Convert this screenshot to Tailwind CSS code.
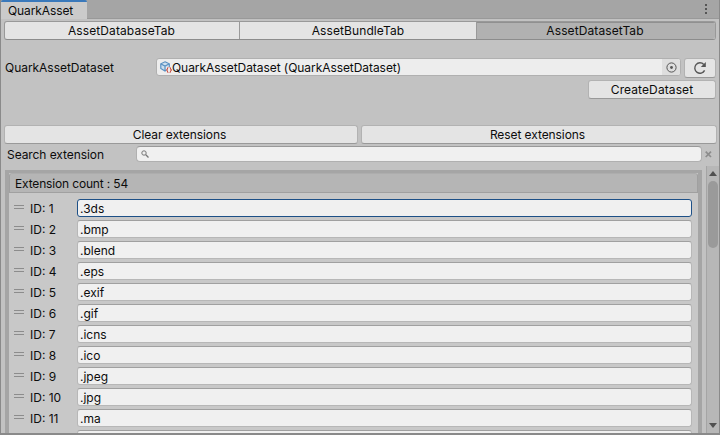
<!DOCTYPE html>
<html lang="en">
<head>
<meta charset="utf-8">
<title>QuarkAsset</title>
<script src="https://cdn.jsdelivr.net/npm/@tailwindcss/browser@4"></script>
</head>
<body class="w-[720px] h-[435px] overflow-hidden bg-[#c2c2c2] text-[#0c0c0c] font-[Inter,sans-serif] text-[12px] leading-[18px] whitespace-nowrap">
<div class="w-[720px] h-[435px] flex flex-col overflow-hidden border-l border-r border-b-2 border-[#8a8a8a]">
  <header class="h-[19px] shrink-0 flex justify-between bg-[#a5a5a5] border-b border-[#999999]">
    <div class="w-[86px] h-[19px] bg-[#cbcbcb] border-t-2 border-[#3a79bb] pl-[7px] leading-[18px] rounded-t-[2px] tracking-[-0.1px]">QuarkAsset</div>
    <svg class="mr-[10px] mt-1" width="5" height="11" fill="#555"><rect x="1" y="0" width="2" height="2"/><rect x="1" y="4" width="2" height="2"/><rect x="1" y="8" width="2" height="2"/></svg>
  </header>
  <nav class="mt-[2px] ml-[3px] w-[712px] h-[19px] shrink-0 flex text-center border border-[#999999] border-b-[#8c8c8c] rounded-[3px] overflow-hidden bg-[#e4e4e4] tracking-[0.1px]">
    <div class="w-[235px] border-r border-[#999] pr-px">AssetDatabaseTab</div>
    <div class="w-[237px] border-r border-[#999]">AssetBundleTab</div>
    <div class="flex-1 bg-[#b1b1b1] shadow-[inset_0_1px_0_#909090] pr-[2px]">AssetDatasetTab</div>
  </nav>
  <div class="mt-[18px] pl-1 h-[20px] shrink-0 flex">
    <div class="w-[151px] leading-[20px] tracking-[-0.04px]">QuarkAssetDataset</div>
    <div class="w-[525px] h-[18px] flex items-center bg-[#ededed] border border-[#b0b0b0] rounded-[3px] overflow-hidden pl-[3px]">
      <svg width="12" height="12" viewBox="0 0 12 12" fill="none"><path d="M5 .8 9.3 2.8V7.5L5 10 .8 7.5V2.8Z" fill="#cfe0ee" stroke="#5a91c2" stroke-width="1.2"/><path d="M1 3 5 5 9 3M5 5V10" stroke="#5a91c2" stroke-width="1.2"/><path d="M6 6h6v6H6z" fill="#ededed"/><path d="M8.4 6.5Q7.4 6.5 7.4 8L6.6 9l.8 1q0 1.5 1 1.5M9.6 6.5q1 0 1 1.5l.8 1-.8 1q0 1.5-1 1.5" stroke="#c85046" stroke-width="1.1"/></svg>
      <span class="tracking-[-0.06px] relative top-px">QuarkAssetDataset (QuarkAssetDataset)</span>
      <div class="ml-auto w-[18px] h-[16px] bg-[#dedede] flex items-center justify-center"><svg width="11" height="11" fill="none" stroke="#555"><circle cx="5.5" cy="5.5" r="4.6"/><circle cx="5.5" cy="5.5" r="1.4" fill="#555" stroke="none"/></svg></div>
    </div>
    <div class="ml-[3px] w-[32px] h-[20px] bg-[#e4e4e4] border border-[#b2b2b2] border-b-[#999] rounded-[3px] flex items-center justify-center"><svg width="14" height="14" fill="none"><path d="M10.8 3.5A5.2 5.2 0 1 0 11.6 9.4" stroke="#555" stroke-width="1.4"/><path d="M12.8 1v5H7.8Z" fill="#555"/></svg></div>
  </div>
  <div class="mt-[2px] ml-[587px] w-[128px] h-[19px] shrink-0 text-center tracking-[0.1px] bg-[#e4e4e4] border border-[#b2b2b2] border-b-[#999] rounded-[3px]">CreateDataset</div>
  <div class="mt-[26px] ml-[3px] h-[19px] shrink-0 flex gap-[3px] text-center tracking-[-0.08px]">
    <div class="w-[354px] bg-[#e4e4e4] border border-[#b2b2b2] border-b-[#999] rounded-[3px] pr-[3px]">Clear extensions</div>
    <div class="w-[356px] bg-[#e4e4e4] border border-[#b2b2b2] border-b-[#999] rounded-[3px] pr-[3px]">Reset extensions</div>
  </div>
  <div class="mt-[2px] h-[20px] shrink-0 flex pl-[6px]">
    <div class="w-[129px] tracking-[-0.07px]">Search extension</div>
    <div class="w-[566px] h-[16px] bg-[#f0f0f0] border border-[#b0b0b0] border-t-[#999] rounded-[4px] pl-[4px] pt-[3px]"><svg width="8" height="9" fill="none" stroke="#777"><circle cx="3" cy="3" r="2.2"/><path d="M4.8 4.8 7.5 7.5" stroke-width="1.3"/></svg></div>
    <svg class="ml-[3px] mt-[5px]" width="7" height="7" stroke="#8c8c8c" stroke-width="1.7"><path d="M.7 .7 6 6M6 .7 .7 6"/></svg>
  </div>
  <main class="flex-1 min-h-0 flex">
    <section class="mt-[4px] ml-[4px] w-[697px] bg-[#c8c8c8] border-4 border-b-0 border-t-[3px] border-[#a5a5a5] overflow-hidden">
      <div class="h-[20px] bg-[#b5b5b5] border border-[#a0a0a0] border-t-[#adadad] rounded-t-[3px] pl-[5px] tracking-[-0.16px] leading-[20px]">Extension count : 54</div>
      <div id="rows" class="pt-[6px] flex flex-col gap-[3px]"></div>
    </section>
    <aside class="ml-[4px] w-[13px] bg-[#b7b7b7] border-l border-[#a5a5a5] flex flex-col items-center">
      <svg class="mt-[5px] shrink-0" width="8" height="5" fill="#505050"><path d="M4 0 8 5H0Z"/></svg>
      <div class="mt-[5px] w-[10px] h-[67px] shrink-0 rounded-full bg-[#9a9a9a]"></div>
      <svg class="mt-auto mb-[5px] shrink-0" width="8" height="5" fill="#505050"><path d="M0 0H8L4 5Z"/></svg>
    </aside>
  </main>
</div>
<template id="row">
  <div class="group h-[18px] shrink-0 flex pl-[5px]">
    <div class="mt-[6px] mr-[6px] w-[10px] h-[4px] border-y border-[#8c8c8c]"></div>
    <div class="label w-[47px] pt-px"></div>
    <div class="field w-[615px] h-[18px] bg-[#f0f0f0] border border-[#b7b7b7] border-t-[#a0a0a0] group-first:border-[#1d5087] group-first:border-t-[#1d5087] rounded-[3px] pl-[2px] leading-[18px]"></div>
  </div>
</template>
<script>
const extensions = ['.3ds','.bmp','.blend','.eps','.exif','.gif','.icns','.ico','.jpeg','.jpg','.ma',''];
extensions.forEach((extension, i) => {
  const row = document.getElementById('row').content.cloneNode(true);
  row.querySelector('.label').textContent = extension ? 'ID: ' + (i + 1) : '';
  row.querySelector('.field').textContent = extension;
  document.getElementById('rows').append(row);
});
</script>
</body>
</html>
